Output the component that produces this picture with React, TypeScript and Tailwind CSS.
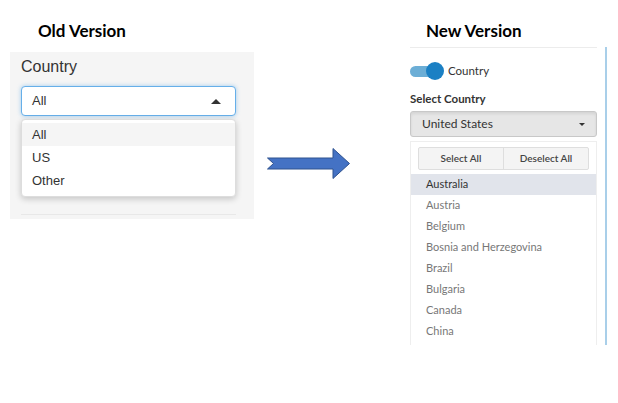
import React from "react";

const countries = [
  "Australia",
  "Austria",
  "Belgium",
  "Bosnia and Herzegovina",
  "Brazil",
  "Bulgaria",
  "Canada",
  "China",
];

function OldVersion() {
  return (
    <div className="ml-[10px] flex w-[244px] flex-col">
      <div className="h-[52px] pl-[28px] pt-[21px] font-['Lato',sans-serif] text-[17px] font-bold leading-[20px] text-black">
        Old Version
      </div>
      <div className="flex h-[167px] flex-col bg-[#f5f5f5] px-[11px] pt-[5px] font-['Liberation_Sans',Arial,sans-serif] text-[#333]">
        <div className="text-[16px] leading-[20px]">Country</div>
        <div className="mt-[9px] flex h-[30px] w-[215px] items-center justify-between rounded-[4px] border border-[#66afe9] bg-white pl-[10px] pr-[14px] text-[13px] shadow-[0_0_4px_rgba(102,175,233,0.6)]">
          <span>All</span>
          <span className="h-0 w-0 border-x-[5px] border-b-[5px] border-x-transparent border-b-[#333]" />
        </div>
        <div className="mt-[3px] flex h-[78px] w-[215px] flex-col rounded-[4px] border border-[#ddd] bg-white py-[3px] text-[13px] shadow-[0_2px_6px_rgba(0,0,0,0.2)]">
          <div className="flex h-[23px] items-center bg-[#f5f5f5] pl-[10px]">All</div>
          <div className="flex h-[23px] items-center pl-[10px]">US</div>
          <div className="flex h-[23px] items-center pl-[10px]">Other</div>
        </div>
        <div className="mt-[17px] h-px w-[215px] bg-[#e8e8e8]" />
      </div>
    </div>
  );
}

function Arrow() {
  return (
    <div className="ml-[13px] mt-[148px]">
      <svg width="84" height="32" viewBox="0 0 84 32">
        <polygon
          points="0.5,10 66,10 66,0.5 82.5,15.5 66,30.5 66,21 0.5,21 6.5,15.5"
          fill="#4472c4"
          stroke="#2f528f"
          strokeWidth="1"
        />
      </svg>
    </div>
  );
}

function NewVersion() {
  return (
    <div className="ml-[59px] flex w-[197px] flex-col font-['Lato',sans-serif]">
      <div className="h-[47px] pl-[16px] pt-[21px] text-[17px] font-bold leading-[20px] text-black">
        New Version
      </div>
      <div className="flex h-[298px] border-r-2 border-[#a9cfe9]">
        <div className="flex w-[187px] flex-col border-t border-[#ececec]">
          <div className="mt-[14px] flex h-[18px] items-center">
            <div className="relative h-[18px] w-[34px]">
              <div className="absolute left-0 top-[4px] h-[11px] w-[31px] rounded-full bg-[#6caed6]" />
              <div className="absolute right-0 top-0 h-[18px] w-[18px] rounded-full bg-[#1b80c4]" />
            </div>
            <span className="ml-[4px] text-[11.5px] text-[#333]">Country</span>
          </div>
          <div className="mt-[12px] text-[11.5px] font-bold leading-[14px] text-[#333]">Select Country</div>
          <div className="mt-[5px] flex h-[26px] items-center justify-between rounded-[3px] border border-[#c8c8c8] bg-[#e6e6e6] pl-[11px] pr-[11px] text-[12px] text-[#333] shadow-[inset_0_2px_3px_rgba(0,0,0,0.08)]">
            <span>United States</span>
            <span className="h-0 w-0 border-x-[3px] border-t-[3px] border-x-transparent border-t-[#333]" />
          </div>
          <div className="mt-[4px] flex flex-1 flex-col border-x border-t border-[#eeeeee] pt-[5px]">
            <div className="mx-[7px] flex h-[23px] rounded-[2px] border border-[#dedede] bg-[#f4f4f4] text-[10px] font-semibold text-[#444]">
              <div className="flex flex-1 items-center justify-center border-r border-[#dedede]">Select All</div>
              <div className="flex flex-1 items-center justify-center">Deselect All</div>
            </div>
            <div className="mt-[4px] flex flex-col text-[11px]">
              {countries.map((c, i) => (
                <div
                  key={c}
                  className={
                    i === 0
                      ? "flex h-[21px] items-center bg-[#e1e4eb] pl-[15px] text-[#333]"
                      : "flex h-[21px] items-center pl-[15px] text-[#777]"
                  }
                >
                  {c}
                </div>
              ))}
            </div>
          </div>
        </div>
      </div>
    </div>
  );
}

export default function App() {
  return (
    <div className="flex h-[403px] w-[618px] items-start bg-white">
      <OldVersion />
      <Arrow />
      <NewVersion />
    </div>
  );
}
